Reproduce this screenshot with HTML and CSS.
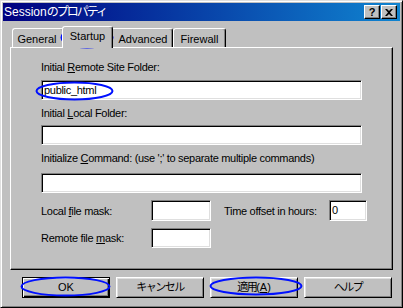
FILE: index.html
```html
<!DOCTYPE html>
<html lang="ja">
<head>
	<meta charset="UTF-8">
	<title>Sessionのプロパティ</title>
	<link rel="stylesheet" href="styles.css">
</head>
<body>
<div class="window">
	<div class="titlebar">
		<span class="title">Session<span class="ja">のプロパティ</span></span>
		<div class="title-buttons">
			<span class="tbtn help">?</span>
			<span class="tbtn close">
				<svg width="8" height="7" viewBox="0 0 8 7"><path d="M0 0h2l2 2 2-2h2L5 3.5 8 7H6L4 5 2 7H0l3-3.5z" fill="#000"/></svg>
			</span>
		</div>
	</div>
	<div class="body">
		<div class="tabs">
			<span class="tab tab-general">General</span>
			<span class="tab tab-startup active">Startup</span>
			<span class="tab tab-advanced">Advanced</span>
			<span class="tab tab-firewall">Firewall</span>
		</div>
		<div class="panel">
			<div class="label">Initial <u>R</u>emote Site Folder:</div>
			<div class="input wide first">public_html</div>
			<div class="label gap">Initial <u>L</u>ocal Folder:</div>
			<div class="input wide second"></div>
			<div class="label gap">Initialize <u>C</u>ommand: (use ';' to separate multiple commands)</div>
			<div class="input wide third"></div>
			<div class="row row-local">
				<span class="row-label">Local <u>f</u>ile mask:</span>
				<div class="input small"></div>
				<span class="row-label time">Time offset in hours:</span>
				<div class="input tiny">0</div>
			</div>
			<div class="row row-remote">
				<span class="row-label">Remote file <u>m</u>ask:</span>
				<div class="input small"></div>
			</div>
		</div>
		<div class="buttons">
			<span class="btn default"><span class="btn-face">OK</span></span>
			<span class="btn"><span class="btn-face ja">キャンセル</span></span>
			<span class="btn"><span class="btn-face"><span class="ja">適用</span>(<u>A</u>)</span></span>
			<span class="btn"><span class="btn-face ja">ヘルプ</span></span>
		</div>
	</div>
	<!-- 手書きの丸印 -->
	<svg class="marks" width="403" height="308" viewBox="0 0 403 308">
		<ellipse cx="87" cy="37.5" rx="25.5" ry="10" />
		<ellipse cx="74.5" cy="91" rx="38" ry="8.5" />
		<ellipse cx="65.5" cy="286.5" rx="44" ry="9" />
		<ellipse cx="256" cy="286" rx="45.5" ry="8.5" />
	</svg>
</div>
</body>
</html>
```

FILE: styles.css
```css
* {
	box-sizing: border-box;
}

body {
	margin: 0;
	background: #c0c0c0;
	font-family: "Liberation Sans", "Noto Sans CJK JP", sans-serif;
	font-size: 11px;
	color: #000;
}

u {
	text-decoration: underline;
	text-underline-offset: 1px;
}

.window {
	position: relative;
	width: 403px;
	height: 308px;
	background: #c0c0c0;
	border: 1px solid;
	border-color: #dfdfdf #000 #000 #dfdfdf;
	box-shadow: inset 1px 1px #fff, inset -1px -1px #808080;
	padding: 2px;
}

.titlebar {
	height: 18px;
	display: flex;
	align-items: center;
	justify-content: space-between;
	padding: 0 3px 0 1px;
	background: linear-gradient(to right, #000080, #1084d0);
	color: #fff;
}

.title {
	font-size: 12px;
	line-height: 18px;
}

.title .ja {
	letter-spacing: -2px;
}

.title-buttons {
	display: flex;
	gap: 1px;
}

.tbtn {
	width: 16px;
	height: 14px;
	display: flex;
	align-items: center;
	justify-content: center;
	background: #c0c0c0;
	color: #000;
	border: 1px solid;
	border-color: #fff #000 #000 #fff;
	box-shadow: inset -1px -1px #808080;
	font-weight: bold;
	font-size: 11px;
	line-height: 12px;
}

.body {
	padding: 5px 7px 0;
}

.tabs {
	display: flex;
	align-items: flex-end;
	height: 21px;
	padding-left: 2px;
}

.tab {
	position: relative;
	height: 19px;
	line-height: 20px;
	text-align: center;
	border: 1px solid;
	border-bottom: none;
	border-color: #fff #000 transparent #fff;
	border-radius: 3px 3px 0 0;
	box-shadow: inset -1px 0 #808080;
}

.tab-general {
	width: 52px;
	padding-right: 2px;
}

.tab-startup {
	width: 47px;
}

.tab-advanced {
	width: 62px;
	padding-left: 2px;
}

.tab-firewall {
	width: 53px;
}

.tab.active {
	width: 51px;
	height: 22px;
	line-height: 19px;
	margin: 0 -2px -1px;
	background: #c0c0c0;
	z-index: 1;
}

.panel {
	height: 223px;
	border: 1px solid;
	border-color: #fff #000 #000 #fff;
	box-shadow: inset -1px -1px #808080;
	padding: 12px 0 0 30px;
	letter-spacing: -0.3px;
}

.label {
	line-height: 14px;
	height: 14px;
	white-space: nowrap;
}

.label.gap {
	margin-top: 6px;
}

.input {
	height: 20px;
	background: #fff;
	border: 1px solid;
	border-color: #808080 #fff #fff #808080;
	box-shadow: inset 1px 1px #000, inset -1px -1px #dfdfdf;
	padding: 0 2px;
	line-height: 18px;
}

.input.wide {
	width: 321px;
}

.input.first {
	margin-top: 6px;
}

.input.second {
	margin-top: 5px;
}

.input.third {
	margin-top: 8px;
}

.row {
	display: flex;
	align-items: center;
	margin-top: 7px;
}

.row-label {
	width: 110px;
	white-space: nowrap;
}

.row-label.time {
	width: 105px;
	margin-left: 13px;
}

.input.small {
	width: 60px;
}

.input.tiny {
	width: 38px;
}

.row-local .input {
	height: 21px;
}

.buttons {
	display: flex;
	gap: 6px;
	margin-top: 7px;
	padding-left: 12px;
}

.btn {
	width: 88px;
	height: 21px;
	display: flex;
	border: 1px solid;
	border-color: #fff #000 #000 #fff;
	box-shadow: inset 1px 1px #dfdfdf, inset -1px -1px #808080;
}

.btn.default {
	border-color: #000;
	box-shadow: inset 1px 1px #fff, inset -1px -1px #000, inset -2px -2px #808080;
}

.btn-face {
	flex: 1;
	text-align: center;
	line-height: 19px;
}

.btn-face.ja,
.btn-face .ja {
	letter-spacing: -1.5px;
}

.marks {
	position: absolute;
	left: -1px;
	top: -1px;
	pointer-events: none;
}

.marks ellipse {
	fill: none;
	stroke: #0010ff;
	stroke-width: 2;
}
```
